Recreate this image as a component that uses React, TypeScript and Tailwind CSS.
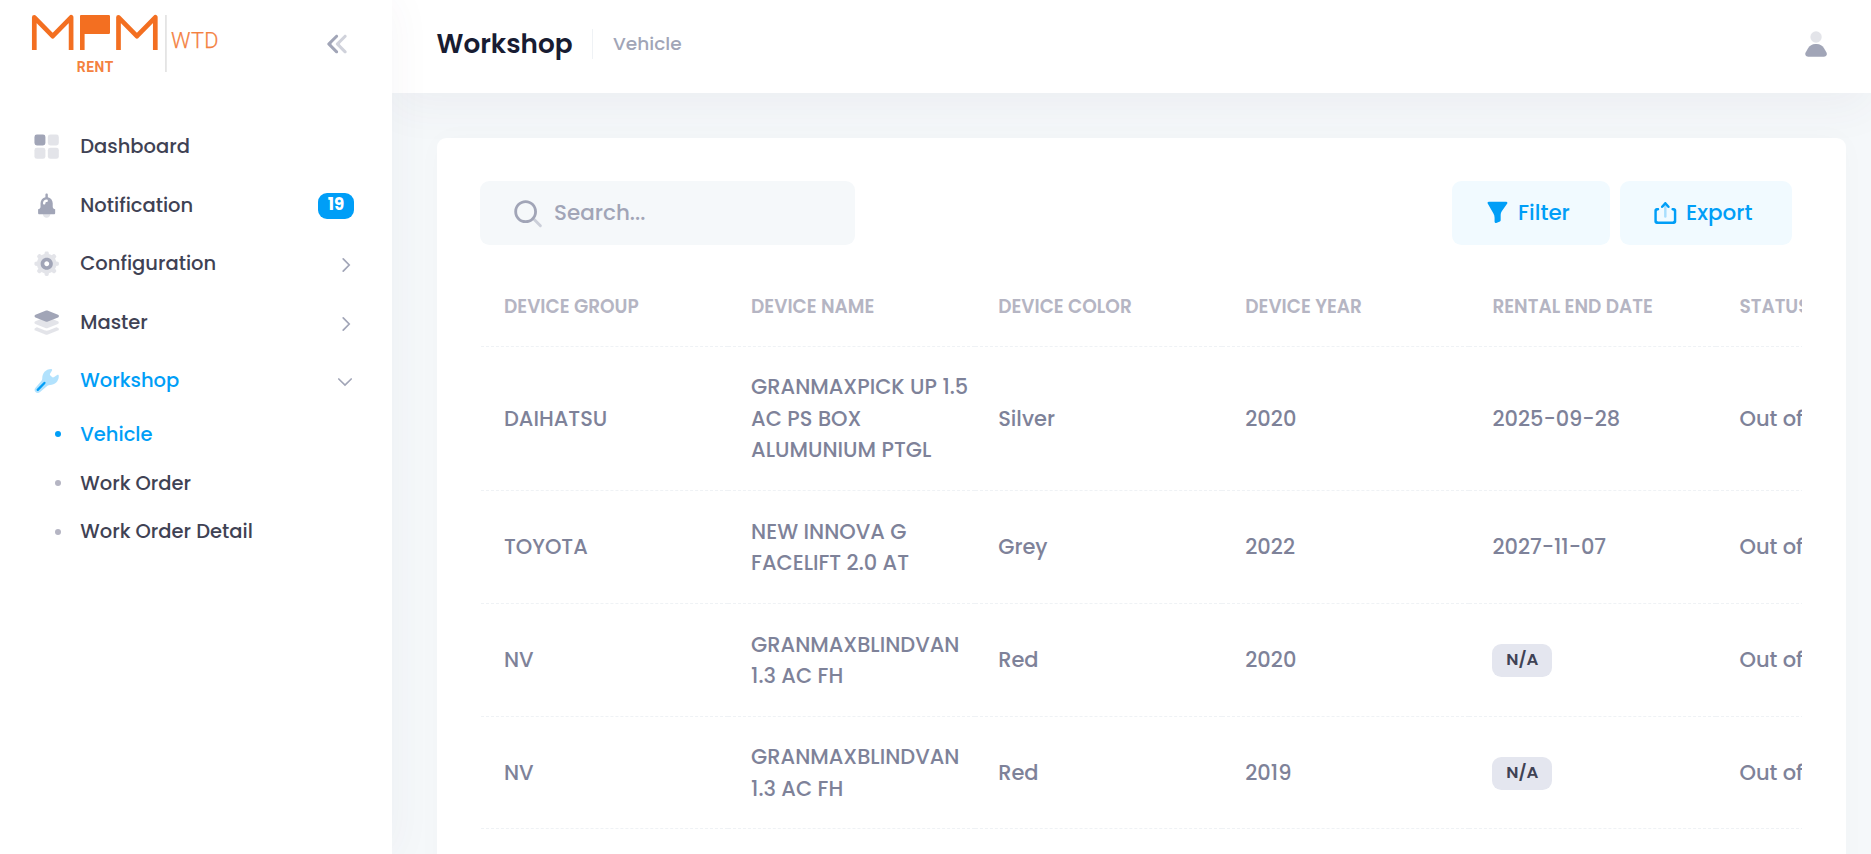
import React from "react";

const DOUBLE_CHEVRON =
  "M14.2657 11.4343L18.45 7.25C18.8642 6.83579 18.8642 6.16421 18.45 5.75C18.0358 5.33579 17.3642 5.33579 16.95 5.75L11.4071 11.2929C11.0166 11.6834 11.0166 12.3166 11.4071 12.7071L16.95 18.25C17.3642 18.6642 18.0358 18.6642 18.45 18.25C18.8642 17.8358 18.8642 17.1642 18.45 16.75L14.2657 12.5657C13.9533 12.2533 13.9533 11.7467 14.2657 11.4343Z";

function Icon({ className = "size-[29.25px]", children }: { className?: string; children: React.ReactNode }) {
  return (
    <svg viewBox="0 0 24 24" fill="currentColor" className={`${className} shrink-0`}>
      {children}
    </svg>
  );
}

function Logo() {
  return (
    <svg width="200" height="66" viewBox="26 11 200 66" fill="none" className="shrink-0">
      <g stroke="#f36f21" strokeWidth="4.7" strokeLinejoin="round">
        <path d="M34.3 50V17.3L52.7 36.2L71.1 17.3V50" />
        <path d="M118.5 50V17.3L136.9 36.2L155.3 17.3V50" />
      </g>
      <path
        d="M81 15H108.7Q110 15 110 16.3V32.7Q110 34 108.7 34H84.6V50H80V16Q80 15 81 15Z"
        fill="#f36f21"
      />
      <rect x="165" y="15" width="1.8" height="57" fill="#e4e4e4" />
      <text x="171" y="48.3" fontSize="21.7" fontWeight="300" fill="#f4813f" stroke="#f4813f" strokeWidth="0.25" textLength="47.5" fontFamily="Roboto, sans-serif">
        WTD
      </text>
      <text x="76.8" y="71.8" fontSize="13.8" fontWeight="700" fill="#f4813f" textLength="36.5" fontFamily="Roboto, sans-serif">
        RENT
      </text>
    </svg>
  );
}

function GridIcon() {
  return (
    <Icon>
      <rect x="2" y="2" width="9" height="9" rx="2" />
      <rect opacity="0.3" x="13" y="2" width="9" height="9" rx="2" />
      <rect opacity="0.3" x="13" y="13" width="9" height="9" rx="2" />
      <rect opacity="0.3" x="2" y="13" width="9" height="9" rx="2" />
    </Icon>
  );
}

function BellIcon() {
  return (
    <Icon>
      <path opacity="0.3" d="M12 22C13.6569 22 15 20.6569 15 19C15 17.3431 13.6569 16 12 16C10.3431 16 9 17.3431 9 19C9 20.6569 10.3431 22 12 22Z" />
      <path d="M19 15V18C19 18.6 18.6 19 18 19H6C5.4 19 5 18.6 5 18V15C6.1 15 7 14.1 7 13V10C7 7.6 8.7 5.6 11 5.1V3C11 2.4 11.4 2 12 2C12.6 2 13 2.4 13 3V5.1C15.3 5.6 17 7.6 17 10V13C17 14.1 17.9 15 19 15ZM11 10C11 9.4 11.4 9 12 9C12.6 9 13 8.6 13 8C13 7.4 12.6 7 12 7C10.3 7 9 8.3 9 10C9 10.6 9.4 11 10 11C10.6 11 11 10.6 11 10Z" />
    </Icon>
  );
}

function GearIcon() {
  return (
    <Icon>
      <path
        opacity="0.3"
        d="M22.1 11.5V12.6C22.1 13.2 21.7 13.6 21.2 13.7L19.9 13.9C19.7 14.7 19.4 15.5 18.9 16.2L19.7 17.3C20 17.7 20 18.4 19.6 18.8L18.8 19.6C18.4 20 17.8 20 17.3 19.7L16.2 18.9C15.5 19.3 14.7 19.7 13.9 19.9L13.7 21.2C13.6 21.7 13.1 22.1 12.6 22.1H11.5C10.9 22.1 10.5 21.7 10.4 21.2L10.2 19.9C9.4 19.7 8.6 19.4 7.9 18.9L6.8 19.7C6.4 20 5.7 20 5.3 19.6L4.5 18.8C4.1 18.4 4.1 17.8 4.4 17.3L5.2 16.2C4.8 15.5 4.4 14.7 4.2 13.9L2.9 13.7C2.4 13.6 2 13.1 2 12.6V11.5C2 10.9 2.4 10.5 2.9 10.4L4.2 10.2C4.4 9.4 4.7 8.6 5.2 7.9L4.4 6.8C4.1 6.4 4.1 5.7 4.5 5.3L5.3 4.5C5.7 4.1 6.3 4.1 6.8 4.4L7.9 5.2C8.6 4.8 9.4 4.4 10.2 4.2L10.4 2.9C10.5 2.4 11 2 11.5 2H12.6C13.2 2 13.6 2.4 13.7 2.9L13.9 4.2C14.7 4.4 15.5 4.7 16.2 5.2L17.3 4.4C17.7 4.1 18.4 4.1 18.8 4.5L19.6 5.3C20 5.7 20 6.3 19.7 6.8L18.9 7.9C19.3 8.6 19.7 9.4 19.9 10.2L21.2 10.4C21.7 10.5 22.1 11 22.1 11.5ZM12.1 8.6C10.2 8.6 8.6 10.2 8.6 12.1C8.6 14 10.2 15.6 12.1 15.6C14 15.6 15.6 14 15.6 12.1C15.6 10.2 14 8.6 12.1 8.6Z"
      />
      <path d="M17.1 12.1C17.1 14.9 14.9 17.1 12.1 17.1C9.3 17.1 7.1 14.9 7.1 12.1C7.1 9.3 9.3 7.1 12.1 7.1C14.9 7.1 17.1 9.3 17.1 12.1ZM12.1 10.1C11 10.1 10.1 11 10.1 12.1C10.1 13.2 11 14.1 12.1 14.1C13.2 14.1 14.1 13.2 14.1 12.1C14.1 11 13.2 10.1 12.1 10.1Z" />
    </Icon>
  );
}

function LayersIcon() {
  return (
    <Icon>
      <path
        opacity="0.3"
        d="M21.25 18.525L13.05 21.825C12.35 22.125 11.65 22.125 10.95 21.825L2.75 18.525C1.75 18.125 1.75 16.725 2.75 16.325L4.05 15.825L10.25 18.325C10.85 18.525 11.45 18.625 12.05 18.625C12.65 18.625 13.25 18.525 13.85 18.325L20.05 15.825L21.35 16.325C22.35 16.725 22.35 18.125 21.25 18.525ZM13.05 16.425L21.25 13.125C22.25 12.725 22.25 11.325 21.25 10.925L13.05 7.625C12.35 7.325 11.65 7.325 10.95 7.625L2.75 10.925C1.75 11.325 1.75 12.725 2.75 13.125L10.95 16.425C11.65 16.725 12.45 16.725 13.05 16.425Z"
      />
      <path d="M11.05 11.025L2.85 7.725C1.85 7.325 1.85 5.925 2.85 5.525L11.05 2.225C11.75 1.925 12.45 1.925 13.15 2.225L21.35 5.525C22.35 5.925 22.35 7.325 21.35 7.725L13.05 11.025C12.45 11.325 11.65 11.325 11.05 11.025Z" />
    </Icon>
  );
}

function WrenchIcon() {
  return (
    <Icon>
      <path
        opacity="0.3"
        d="M15.8 2.4C16.6 2.6 16.8 3.2 16.3 3.8L14.8 6.4C14.6 7 14.7 7.6 15.3 8.1L16.7 9.3C17.2 9.5 17.8 9.4 18.2 9L20.6 7.4C21.4 7 22 7.4 22 8.2C22 12.5 18.8 15.6 14.8 15.6C14 15.6 13.3 15.8 12.7 16.3L6.6 21.3C5.6 22.3 4 22.5 2.9 21.4C1.8 20.3 1.9 18.7 2.9 17.8L7.6 12.4C8.1 11.8 8.4 11 8.4 10.2C8.3 6 11.3 2.3 15.8 2.4Z"
      />
      <path d="M4.7 19.6L10.2 13.9" stroke="currentColor" strokeWidth="1.9" strokeLinecap="round" />
    </Icon>
  );
}

const NAV = [
  { label: "Dashboard", icon: <GridIcon /> },
  { label: "Notification", icon: <BellIcon />, badge: "19" },
  { label: "Configuration", icon: <GearIcon />, arrow: "right" },
  { label: "Master", icon: <LayersIcon />, arrow: "right" },
  { label: "Workshop", icon: <WrenchIcon />, arrow: "down", active: true },
];

const SUB_NAV = [
  { label: "Vehicle", active: true },
  { label: "Work Order", active: false },
  { label: "Work Order Detail", active: false },
];

const COLUMNS = ["DEVICE GROUP", "DEVICE NAME", "DEVICE COLOR", "DEVICE YEAR", "RENTAL END DATE", "STATUS"];

const ROWS = [
  ["DAIHATSU", "GRANMAXPICK UP 1.5 AC PS BOX ALUMUNIUM PTGL", "Silver", "2020", "2025-09-28", "Out of"],
  ["TOYOTA", "NEW INNOVA G FACELIFT 2.0 AT", "Grey", "2022", "2027-11-07", "Out of"],
  ["NV", "GRANMAXBLINDVAN 1.3 AC FH", "Red", "2020", null, "Out of"],
  ["NV", "GRANMAXBLINDVAN 1.3 AC FH", "Red", "2019", null, "Out of"],
];

function Sidebar() {
  return (
    <aside className="relative z-10 flex w-[392px] shrink-0 flex-col bg-white shadow-[0_0_42px_0_rgba(82,63,105,0.05)]">
      <div className="flex h-[88px] shrink-0 items-center justify-between pr-[37.5px] pl-[26px]">
        <Logo />
        <Icon className="size-[34.1px] text-[#a1a5b7]">
          <path opacity="0.5" d={DOUBLE_CHEVRON} />
          <path d={DOUBLE_CHEVRON} transform="translate(-6 0)" />
        </Icon>
      </div>
      <nav className="flex flex-col pt-[29.4px] text-[19.5px] font-medium text-[#3f4254]">
        {NAV.map((item) => (
          <div
            key={item.label}
            className={`flex h-[58.5px] items-center pr-[38px] pl-[32px] ${item.active ? "text-[#009ef7]" : ""}`}
          >
            <span className={`mr-[19px] ${item.active ? "" : "text-[#a1a5b7]"}`}>{item.icon}</span>
            <span className="grow">{item.label}</span>
            {item.badge && (
              <span className="mt-[2px] flex h-[26px] w-9 items-center justify-center rounded-[9px] bg-[#009ef7] pb-px text-[16.6px] leading-none font-bold text-white">
                {item.badge}
              </span>
            )}
            {item.arrow === "right" && (
              <svg width="16" height="16" viewBox="0 0 16 16" fill="none" className="mt-[3px] text-[#a1a5b7]">
                <path d="M5.2 1.8L11.2 8L5.2 14.2" stroke="currentColor" strokeWidth="1.7" strokeLinecap="round" />
              </svg>
            )}
            {item.arrow === "down" && (
              <svg width="16" height="16" viewBox="0 0 16 16" fill="none" className="mt-[2px] mr-px text-[#a1a5b7]">
                <path d="M1.8 5L8 11L14.2 5" stroke="currentColor" strokeWidth="1.7" strokeLinecap="round" />
              </svg>
            )}
          </div>
        ))}
        {SUB_NAV.map((item) => (
          <div
            key={item.label}
            className={`flex h-[48.9px] items-center pl-[55px] ${item.active ? "text-[#009ef7]" : ""}`}
          >
            <span className={`mr-[19.3px] size-[6px] rounded-full ${item.active ? "bg-[#009ef7]" : "bg-[#b5b5c3]"}`} />
            <span>{item.label}</span>
          </div>
        ))}
      </nav>
    </aside>
  );
}

function Header() {
  return (
    <header className="flex h-[93px] shrink-0 items-center justify-between bg-white pr-[38px] pb-[5px] pl-[44.5px] shadow-[0_15px_45px_0_rgba(82,63,105,0.05)]">
      <div className="flex items-center">
        <h1 className="text-[26.3px] font-semibold text-[#181c32]">Workshop</h1>
        <span className="ml-[19.5px] h-[30px] w-px bg-[#eff2f5]" />
        <span className="ml-[20px] text-[18.5px] font-medium text-[#a1a5b7]">Vehicle</span>
      </div>
      <Icon className="size-[34.1px] text-[#a1a5b7]">
        <path d="M6.28548 15.0861C7.34369 13.1814 9.35142 12 11.5304 12H12.4696C14.6486 12 16.6563 13.1814 17.7145 15.0861L19.3493 18.0287C20.0899 19.3618 19.1259 21 17.601 21H6.39903C4.87406 21 3.91012 19.3618 4.65071 18.0287L6.28548 15.0861Z" />
        <rect opacity="0.3" x="8" y="3" width="8" height="8" rx="4" />
      </Icon>
    </header>
  );
}

function Toolbar() {
  return (
    <div className="flex items-center justify-between pr-[10px] text-[21.45px] font-medium">
      <div className="flex h-16 w-[375px] items-center rounded-[9.3px] bg-[#f5f8fa] pl-[29.5px] text-[#a1a5b7]">
        <Icon className="size-[34.1px]">
          <rect opacity="0.5" x="17.0365" y="15.1223" width="8.15546" height="2" rx="1" transform="rotate(45 17.0365 15.1223)" />
          <path d="M11 19C6.55556 19 3 15.4444 3 11C3 6.55556 6.55556 3 11 3C15.4444 3 19 6.55556 19 11C19 15.4444 15.4444 19 11 19ZM11 5C7.53333 5 5 7.53333 5 11C5 14.4667 7.53333 17 11 17C14.4667 17 17 14.4667 17 11C17 7.53333 14.4667 5 11 5Z" />
        </Icon>
        <span className="ml-[10.5px]">Search...</span>
      </div>
      <div className="flex gap-[10px] text-[#009ef7]">
        <button className="flex h-16 w-[158px] items-center rounded-[9.3px] bg-[#f1faff] pl-[30.8px]">
          <Icon>
            <path d="M19.0759 3H4.72777C3.95892 3 3.47768 3.83148 3.86067 4.49814L8.56967 12.6949C9.17923 13.7559 9.5 14.9582 9.5 16.1819V19.5072C9.5 20.2189 10.2223 20.7028 10.8805 20.432L13.8805 19.1977C14.2553 19.0435 14.5 18.6783 14.5 18.273V13.8372C14.5 12.8089 14.8171 11.8056 15.408 10.964L19.8943 4.57465C20.3596 3.912 19.8856 3 19.0759 3Z" />
          </Icon>
          <span className="ml-[6px]">Filter</span>
        </button>
        <button className="flex h-16 w-[172px] items-center rounded-[9.3px] bg-[#f1faff] pl-[30.8px]">
          <Icon>
            <rect opacity="0.3" x="12.75" y="4.25" width="12" height="2" rx="1" transform="rotate(90 12.75 4.25)" />
            <path d="M12.0573 6.11875L13.5203 7.87435C13.9121 8.34457 14.6232 8.37683 15.056 7.94401C15.4457 7.5543 15.4641 6.92836 15.0979 6.51643L12.4974 3.59084C12.0996 3.14332 11.4004 3.14332 11.0026 3.59084L8.40206 6.51643C8.0359 6.92836 8.0543 7.5543 8.44401 7.94401C8.87683 8.37683 9.58785 8.34458 9.9797 7.87435L11.4427 6.11875C11.6026 5.92684 11.8974 5.92684 12.0573 6.11875Z" />
            <path d="M18.75 8.25H17.75C17.1977 8.25 16.75 8.69772 16.75 9.25C16.75 9.80228 17.1977 10.25 17.75 10.25C18.3023 10.25 18.75 10.6977 18.75 11.25V18.25C18.75 18.8023 18.3023 19.25 17.75 19.25H5.75C5.19772 19.25 4.75 18.8023 4.75 18.25V11.25C4.75 10.6977 5.19771 10.25 5.75 10.25C6.30229 10.25 6.75 9.80228 6.75 9.25C6.75 8.69772 6.30229 8.25 5.75 8.25H4.75C3.64543 8.25 2.75 9.14543 2.75 10.25V19.25C2.75 20.3546 3.64543 21.25 4.75 21.25H18.75C19.8546 21.25 20.75 20.3546 20.75 19.25V10.25C20.75 9.14543 19.8546 8.25 18.75 8.25Z" />
          </Icon>
          <span className="ml-[6px]">Export</span>
        </button>
      </div>
    </div>
  );
}

function VehicleTable() {
  return (
    <div className="mt-[24px] ml-px overflow-hidden">
      <table className="w-[1482.6px] table-fixed border-separate border-spacing-0 text-left font-medium text-[#7e8299]">
        <thead>
          <tr className="text-[18.53px] leading-[27.8px] text-[#b5b5c3]">
            {COLUMNS.map((c) => (
              <th key={c} className="border-b border-dashed border-[#eff2f5] py-[24.4px] pr-[10px] pl-[23px] font-semibold whitespace-nowrap">
                {c}
              </th>
            ))}
          </tr>
        </thead>
        <tbody className="text-[20.96px] leading-[31.44px]">
          {ROWS.map((row, i) => (
            <tr key={i}>
              {row.map((cell, j) => (
                <td key={j} className="border-b border-dashed border-[#eff2f5] pt-[24.8px] pr-[2px] pb-[24.2px] pl-[23px] align-middle">
                  {cell ?? (
                    <span className="mt-[2px] flex h-[33px] w-[60px] items-center justify-center rounded-[9.3px] bg-[#e4e6ef] pb-[2px] text-[16.6px] leading-none font-semibold text-[#3f4254]">
                      N/A
                    </span>
                  )}
                </td>
              ))}
            </tr>
          ))}
        </tbody>
      </table>
    </div>
  );
}

export default function App() {
  return (
    <div className="flex h-[854px] w-full overflow-hidden bg-[#f5f8fa] font-['Poppins','Inter',sans-serif] leading-normal">
      <Sidebar />
      <div className="flex min-w-0 grow flex-col">
        <Header />
        <main className="mt-[45px] mr-[25px] ml-[45px] h-[900px] shrink-0 rounded-[9.3px] bg-white pt-[43px] pr-[44px] pl-[43px] shadow-[0_0_30px_0_rgba(76,87,125,0.02)]">
          <Toolbar />
          <VehicleTable />
        </main>
      </div>
    </div>
  );
}
